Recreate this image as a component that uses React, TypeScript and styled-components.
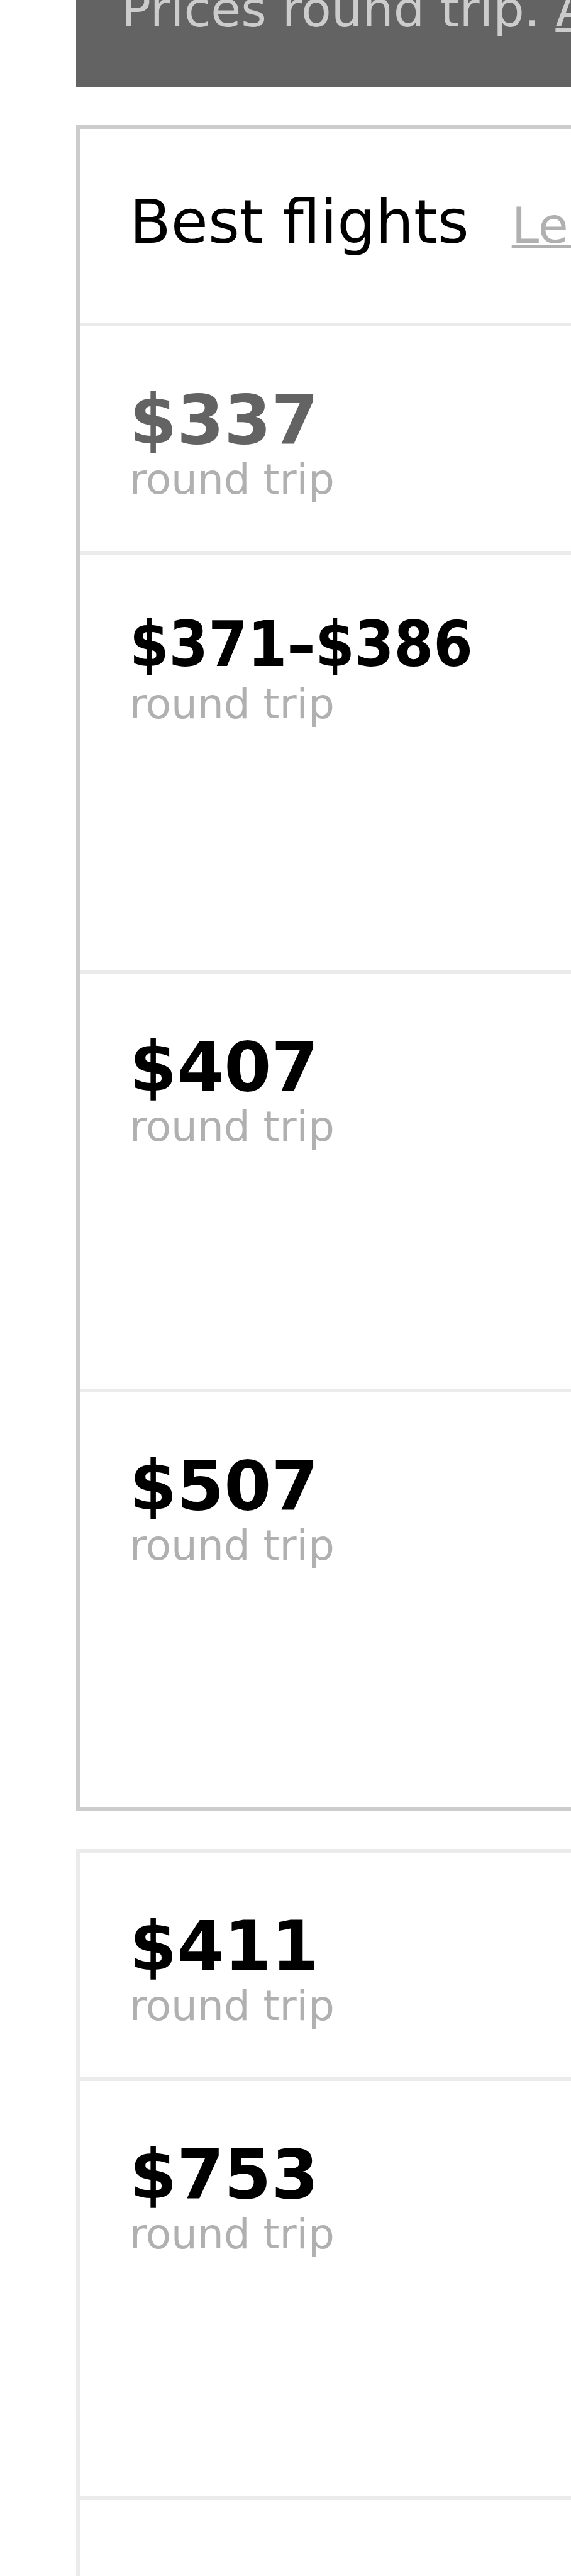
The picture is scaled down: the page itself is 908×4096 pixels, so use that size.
import React from "react";
import styled, { createGlobalStyle } from "styled-components";

const GlobalStyle = createGlobalStyle`
  * { box-sizing: border-box; }
  html, body { margin: 0; background: #fff; }
  body {
    font-family: "DejaVu Sans", sans-serif;
    color: #000;
    overflow-x: hidden;
  }
`;

const Page = styled.main`
  min-height: 100vh;
  padding-left: 121px;
  display: flex;
  flex-direction: column;
  gap: 60px;
  overflow: hidden;
`;

const NoticeBar = styled.div`
  padding: 0 0 109px 72px;
  background: #636363;
  color: #ccc;
  font-size: 78px;
  line-height: 30px;
  white-space: nowrap;
`;

const NoticeLink = styled.a`
  color: inherit;
  text-decoration-thickness: 6px;
`;

const Card = styled.section<{ $strong?: boolean; $open?: boolean }>`
  display: flex;
  flex-direction: column;
  border: 6px solid ${(p) => (p.$strong ? "#ccc" : "#ebebeb")};
  border-right: 0;
  ${(p) => p.$open && "border-bottom: 0; flex: 1;"}
`;

const CardHeader = styled.header`
  display: flex;
  align-items: baseline;
  gap: 68px;
  padding: 88px 0 100px 79px;
  white-space: nowrap;
`;

const Title = styled.h2`
  margin: 0;
  font-size: 96px;
  font-weight: 400;
  line-height: 120px;
`;

const LearnLink = styled.a`
  color: #b0b0b0;
  font-size: 78px;
  line-height: 78px;
  text-decoration-thickness: 6px;
`;

const Row = styled.div<{ $tall?: boolean }>`
  min-height: ${(p) => (p.$tall ? 666 : 357)}px;
  padding: 88px 0 79px 79px;
  white-space: nowrap;

  * + & {
    border-top: 6px solid #ebebeb;
  }
`;

const EmptyRow = styled.div`
  flex: 1;
  min-height: 120px;
  border-top: 6px solid #ebebeb;
`;

const Price = styled.div<{ $range?: boolean; $muted?: boolean }>`
  font-weight: 700;
  font-size: ${(p) => (p.$range ? 100 : 108)}px;
  line-height: ${(p) => (p.$range ? 110 : 122)}px;
  margin-bottom: ${(p) => (p.$range ? 6 : 0)}px;
  color: ${(p) => (p.$muted ? "#636363" : "#000")};
  ${(p) => p.$range && 'font-family: "DejaVu Sans Condensed", "DejaVu Sans", sans-serif;'}
`;

const Trip = styled.div`
  color: #b0b0b0;
  font-size: 66px;
  line-height: 68px;
`;

type Fare = { price: string; tall?: boolean; range?: boolean; muted?: boolean };

const bestFares: Fare[] = [
  { price: "$337", muted: true },
  { price: "$371–$386", tall: true, range: true },
  { price: "$407", tall: true },
  { price: "$507", tall: true },
];

const otherFares: Fare[] = [{ price: "$411" }, { price: "$753", tall: true }];

const FareRow = ({ price, tall, range, muted }: Fare) => (
  <Row $tall={tall}>
    <Price $range={range} $muted={muted}>{price}</Price>
    <Trip>round trip</Trip>
  </Row>
);

export default function App() {
  return (
    <>
      <GlobalStyle />
      <Page>
        <NoticeBar>
          Prices round trip. <NoticeLink href="#fees">A</NoticeLink>
        </NoticeBar>
        <Card $strong>
          <CardHeader>
            <Title>Best flights</Title>
            <LearnLink href="#learn">Learn more</LearnLink>
          </CardHeader>
          {bestFares.map((fare) => (
            <FareRow key={fare.price} {...fare} />
          ))}
        </Card>
        <Card $open>
          {otherFares.map((fare) => (
            <FareRow key={fare.price} {...fare} />
          ))}
          <EmptyRow />
        </Card>
      </Page>
    </>
  );
}
